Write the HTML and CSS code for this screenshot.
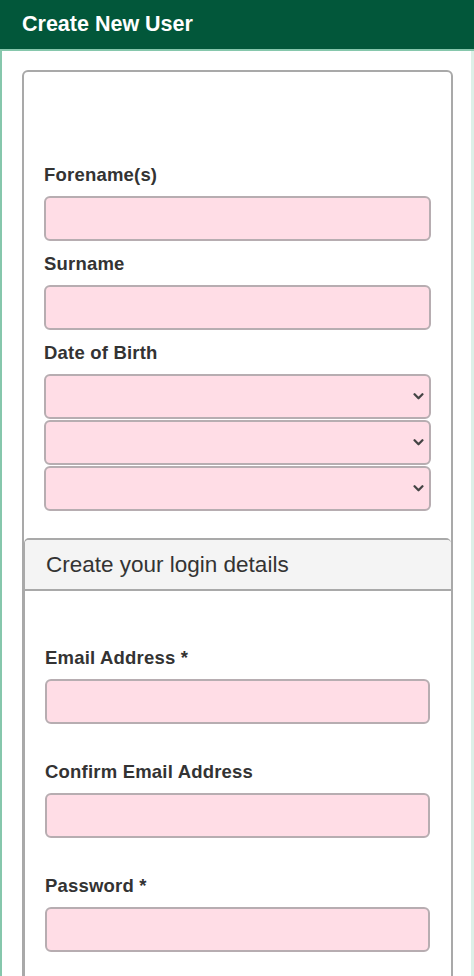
FILE: index.html
```html
<!DOCTYPE html>
<html lang="en">
<head>
<meta charset="utf-8">
<title>Create New User</title>
<link rel="stylesheet" href="styles.css">
</head>
<body>
<header class="topbar">Create New User</header>
<main class="page">
  <form class="card">
    <div class="section">
      <label class="label" for="fore">Forename(s)</label>
      <input class="field" id="fore" type="text">
      <label class="label next" for="sur">Surname</label>
      <input class="field" id="sur" type="text">
      <label class="label next" for="dd">Date of Birth</label>
      <div class="select-wrap">
        <select class="field select" id="dd"><option></option></select>
        <svg class="chev" viewBox="0 0 12 8" width="11" height="7"><path d="M1.5 1.5 L6 6 L10.5 1.5" fill="none" stroke="#444" stroke-width="2.6" stroke-linecap="round" stroke-linejoin="round"/></svg>
      </div>
      <div class="select-wrap">
        <select class="field select"><option></option></select>
        <svg class="chev" viewBox="0 0 12 8" width="11" height="7"><path d="M1.5 1.5 L6 6 L10.5 1.5" fill="none" stroke="#444" stroke-width="2.6" stroke-linecap="round" stroke-linejoin="round"/></svg>
      </div>
      <div class="select-wrap">
        <select class="field select"><option></option></select>
        <svg class="chev" viewBox="0 0 12 8" width="11" height="7"><path d="M1.5 1.5 L6 6 L10.5 1.5" fill="none" stroke="#444" stroke-width="2.6" stroke-linecap="round" stroke-linejoin="round"/></svg>
      </div>
    </div>
    <section class="panel">
      <h2 class="panel-head">Create your login details</h2>
      <div class="panel-body">
        <label class="label" for="email">Email Address *</label>
        <input class="field" id="email" type="email">
        <label class="label gap" for="email2">Confirm Email Address</label>
        <input class="field" id="email2" type="email">
        <label class="label gap" for="pw">Password *</label>
        <input class="field" id="pw" type="password">
      </div>
    </section>
  </form>
</main>
</body>
</html>
```
FILE: styles.css
```css
* { box-sizing: border-box; }
html, body { margin: 0; padding: 0; background: #fff; }
body {
  font-family: "Liberation Sans", Arial, Helvetica, sans-serif;
  color: #333;
  height: 976px;
  overflow: hidden;
}
.topbar {
  height: 51px;
  background: #02573a;
  border-bottom: 2px solid #86c7ac;
  color: #fff;
  font-weight: bold;
  font-size: 21.5px;
  line-height: 49px;
  padding-left: 22px;
}
.page {
  border-left: 2px solid #86c7ac;
  border-right: 3px solid #ddf0e7;
  min-height: 925px;
  padding: 19px 18px 0 20px;
}
.card {
  border: 2px solid #a9a9a9;
  border-radius: 6px;
  min-height: 920px;
  display: flex;
  flex-direction: column;
}
.section {
  padding: 92px 20px 26px 20px;
  display: flex;
  flex-direction: column;
}
.label {
  display: block;
  font-weight: bold;
  font-size: 18.5px;
  line-height: 22px;
  letter-spacing: 0.2px;
  color: #333;
  margin-bottom: 10px;
}
.label.next { margin-top: 12px; }
.label.gap { margin-top: 37px; }
.field {
  display: block;
  width: 100%;
  height: 45px;
  margin: 0;
  background: #ffdde6;
  border: 2px solid #b7adb1;
  border-radius: 6px;
  font: inherit;
  padding: 0 10px;
  outline: none;
}
.select-wrap {
  position: relative;
  margin-bottom: 1px;
}
.select {
  -webkit-appearance: none;
  appearance: none;
}
.chev {
  position: absolute;
  right: 7px;
  top: 19px;
  pointer-events: none;
}
.panel {
  border-top: 2px solid #a9a9a9;
  border-left: 1px solid #a9a9a9;
  border-top-left-radius: 5px;
  border-top-right-radius: 5px;
  flex: 1;
}
.panel-head {
  margin: 0;
  height: 51px;
  background: #f4f4f4;
  border-bottom: 2px solid #a9a9a9;
  border-top-left-radius: 4px;
  border-top-right-radius: 4px;
  font-weight: normal;
  font-size: 22.5px;
  line-height: 50px;
  padding-left: 21px;
  color: #333;
}
.panel-body {
  padding: 56px 21px 0 20px;
  display: flex;
  flex-direction: column;
}
```
